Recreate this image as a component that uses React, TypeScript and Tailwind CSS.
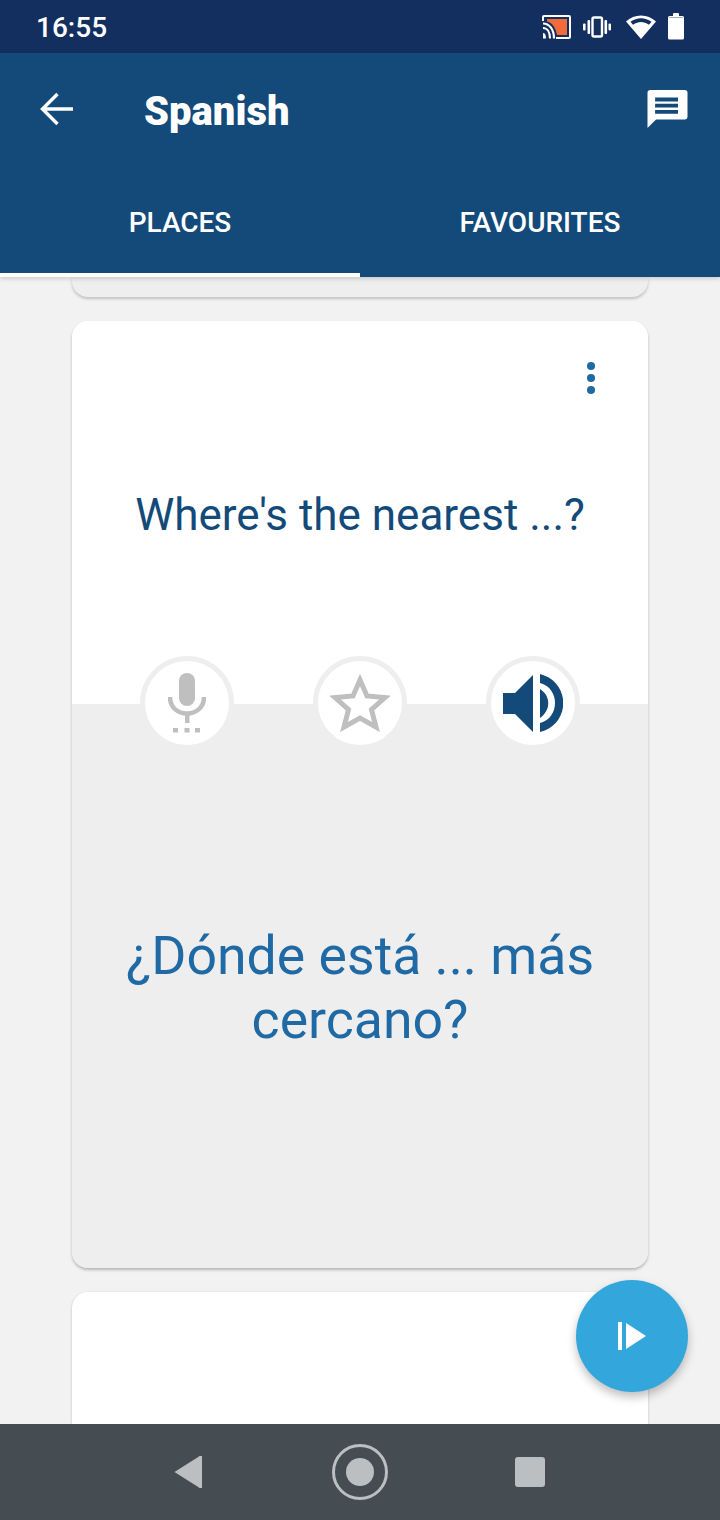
function StatusIcons() {
  return (
    <div className="flex items-center">
      {/* cast */}
      <svg width="30" height="26" viewBox="0 0 30 26" className="mr-[12px]">
        <path d="M6 5 H26 V21 H16 C15 14 11 8.500 6 7.500 Z" fill="#f26b3a" />
        <path d="M2 7 V3 a1 1 0 0 1 1 -1 H28 a1 1 0 0 1 1 1 V23 a1 1 0 0 1 -1 1 H15" fill="none" stroke="#fff" strokeWidth="2" />
        <path d="M2 9.500 C8 9.500 13 15 13 24.500" fill="none" stroke="#fff" strokeWidth="2.200" />
        <path d="M2 14 C6.500 14 9 18.500 9 24.500" fill="none" stroke="#fff" strokeWidth="2.200" />
        <path d="M2 19 C4 19 5 21 5 24.500 H2 Z" fill="#fff" />
      </svg>
      {/* vibrate */}
      <svg width="28" height="22" viewBox="0 0 28 22" className="mr-[15px]">
        <rect x="9.500" y="1.500" width="9.500" height="19" rx="1.500" fill="none" stroke="#fff" strokeWidth="2.400" />
        <rect x="4.500" y="4" width="2.600" height="14" rx="1" fill="#fff" />
        <rect x="21.500" y="4" width="2.600" height="14" rx="1" fill="#fff" />
        <rect x="0" y="7.500" width="2.600" height="7" rx="1" fill="#fff" />
        <rect x="25.500" y="7.500" width="2.600" height="7" rx="1" fill="#fff" />
      </svg>
      {/* wifi */}
      <svg width="30" height="26" viewBox="0 0 30 26" className="mr-[12px]">
        <path d="M0 7.500 C8 -0.500 22 -0.500 30 7.500 L15 25 Z" fill="#fff" />
        <path d="M4.500 7.800 C11 3 19 3 25.500 7.800 L23 10.800 C17.500 7 12.500 7 7 10.800 Z" fill="#132f60" />
      </svg>
      {/* battery */}
      <svg width="16" height="27" viewBox="0 0 16 27">
        <path d="M5 3 V1 a1 1 0 0 1 1 -1 H10 a1 1 0 0 1 1 1 V3 H14.500 a1.500 1.500 0 0 1 1.500 1.500 V25 a1.500 1.500 0 0 1 -1.500 1.500 H1.500 A1.500 1.500 0 0 1 0 25 V4.500 A1.500 1.500 0 0 1 1.500 3 Z" fill="#fff" />
        <rect x="1.500" y="4.200" width="13" height="0.800" fill="#132f60" opacity="0.5" />
      </svg>
    </div>
  );
}

function RoundButton({ children }: { children: React.ReactNode }) {
  return (
    <div className="w-[94px] h-[94px] rounded-full bg-white border-[5px] border-[#eeeeee] flex items-center justify-center">
      {children}
    </div>
  );
}

export default function App() {
  return (
    <div className="w-[720px] h-[1520px] flex flex-col overflow-hidden relative bg-[#f2f2f2] font-['Roboto',sans-serif]">
      {/* status bar */}
      <div className="h-[53px] bg-[#132f60] flex items-center justify-between pl-[36px] pr-[36px]">
        <span className="text-white text-[28px] font-medium pt-[2px]">16:55</span>
        <StatusIcons />
      </div>

      {/* app bar */}
      <div className="h-[224px] bg-[#134a7a] flex flex-col shadow-[0_2px_4px_rgba(0,0,0,0.15)] z-10">
        <div className="h-[112px] flex items-center pl-[40px] pr-[32px]">
          <svg width="34" height="34" viewBox="0 0 34 34" className="mr-[70px]">
            <path d="M33 17 H3 M17.500 2 L2.500 17 L17.500 32" fill="none" stroke="#fff" strokeWidth="3.400" />
          </svg>
          <h1 className="text-white text-[40px] font-black flex-1 pt-[6px]">Spanish</h1>
          <svg width="41" height="40" viewBox="0 0 42 42">
            <path d="M3 1 H39 a3 3 0 0 1 3 3 V29 a3 3 0 0 1 -3 3 H9 L0 41 V4 a3 3 0 0 1 3 -3 Z" fill="#fff" />
            <path d="M8 9 H32 V13 H8 Z M8 15.500 H32 V19.500 H8 Z M8 22 H32 V26 H8 Z" fill="#134a7a" />
          </svg>
        </div>
        <div className="flex-1 flex">
          <div className="w-1/2 flex items-center justify-center border-b-[4px] border-white">
            <span className="text-white text-[28px] font-medium pt-[8px]">PLACES</span>
          </div>
          <div className="w-1/2 flex items-center justify-center border-b-[4px] border-transparent">
            <span className="text-white text-[28px] font-medium pt-[8px]">FAVOURITES</span>
          </div>
        </div>
      </div>

      {/* card list */}
      <div className="flex-1 overflow-hidden px-[72px] flex flex-col gap-[24px]">
        <div className="h-[20px] shrink-0 bg-[#eeeeee] rounded-b-[16px] shadow-[0_2px_3px_rgba(0,0,0,0.2)]" />

        <div className="h-[947px] shrink-0 rounded-[16px] overflow-hidden flex flex-col relative shadow-[0_2px_3px_rgba(0,0,0,0.25)]">
          <div className="h-[383px] bg-white relative flex justify-center pt-[166px]">
            <div className="absolute top-[41px] right-[53px] flex flex-col gap-[4px]">
              <span className="w-[8px] h-[8px] rounded-full bg-[#1f6aa5]" />
              <span className="w-[8px] h-[8px] rounded-full bg-[#1f6aa5]" />
              <span className="w-[8px] h-[8px] rounded-full bg-[#1f6aa5]" />
            </div>
            <p className="text-[#134a7a] text-[44px] leading-[56px]">Where's the nearest ...?</p>
          </div>
          <div className="flex-1 bg-[#eeeeee] flex justify-center pt-[220px]">
            <p className="text-[#1f6aa5] text-[53.600px] leading-[64px] text-center w-[500px]">¿Dónde está ... más cercano?</p>
          </div>

          {/* buttons sitting on the split */}
          <div className="absolute top-[335px] left-[68px] w-[440px] flex justify-between">
            <RoundButton>
              <svg width="38" height="60" viewBox="0 0 38 60">
                <rect x="11" y="0" width="16" height="33" rx="8" fill="#bfbfbf" />
                <path d="M2 24 C2 46 36 46 36 24" fill="none" stroke="#bfbfbf" strokeWidth="4.500" />
                <rect x="17" y="40" width="4.500" height="10" fill="#bfbfbf" />
                <rect x="5" y="55" width="5" height="4.500" fill="#bfbfbf" />
                <rect x="16.500" y="55" width="5" height="4.500" fill="#bfbfbf" />
                <rect x="27" y="55" width="5" height="4.500" fill="#bfbfbf" />
              </svg>
            </RoundButton>
            <RoundButton>
              <svg width="60" height="58" viewBox="0 0 60 58">
                <path d="M30 6 L37 22 L55 23.500 L41.500 35.500 L46 53 L30 44 L14 53 L18.500 35.500 L5 23.500 L23 22 Z" fill="none" stroke="#bfbfbf" strokeWidth="5" />
              </svg>
            </RoundButton>
            <RoundButton>
              <svg width="60" height="58" viewBox="0 0 60 58">
                <path d="M0 19 H12 L30 1 V58 L12 40 H0 Z" fill="#134a7a" />
                <path d="M37 0 C68 8 68 50 37 58 V49 C57 44 57 14 37 9 Z" fill="#134a7a" />
                <path d="M37 15 C48 22 48 36 37 44 Z" fill="#134a7a" />
              </svg>
            </RoundButton>
          </div>
        </div>

        <div className="flex-1 bg-white rounded-t-[16px] shadow-[0_1px_3px_rgba(0,0,0,0.2)]" />
      </div>

      {/* fab */}
      <div className="absolute left-[576px] top-[1280px] w-[112px] h-[112px] rounded-full bg-[#33a7dc] flex items-center justify-center shadow-[0_5px_10px_rgba(0,0,0,0.25)]">
        <svg width="28" height="28" viewBox="0 0 28 28">
          <rect x="0" y="0" width="4" height="28" fill="#fff" />
          <path d="M8 1 L28 14 L8 27 Z" fill="#fff" />
        </svg>
      </div>

      {/* nav bar */}
      <div className="h-[96px] bg-[#454c52] flex items-center justify-center shrink-0 pr-[2px]">
        <svg width="28" height="32" viewBox="0 0 28 32" className="mr-[130px]">
          <path d="M0.500 16 L25 0.500 a1.500 1.500 0 0 1 3 1 V30.500 a1.500 1.500 0 0 1 -3 1 Z" fill="#bcbfc1" />
        </svg>
        <div className="w-[56px] h-[56px] rounded-full border-[3px] border-[#bcbfc1] flex items-center justify-center mr-[127px]">
          <span className="w-[28px] h-[28px] rounded-full bg-[#bcbfc1]" />
        </div>
        <span className="w-[30px] h-[30px] rounded-[3px] bg-[#bcbfc1]" />
      </div>
    </div>
  );
}
